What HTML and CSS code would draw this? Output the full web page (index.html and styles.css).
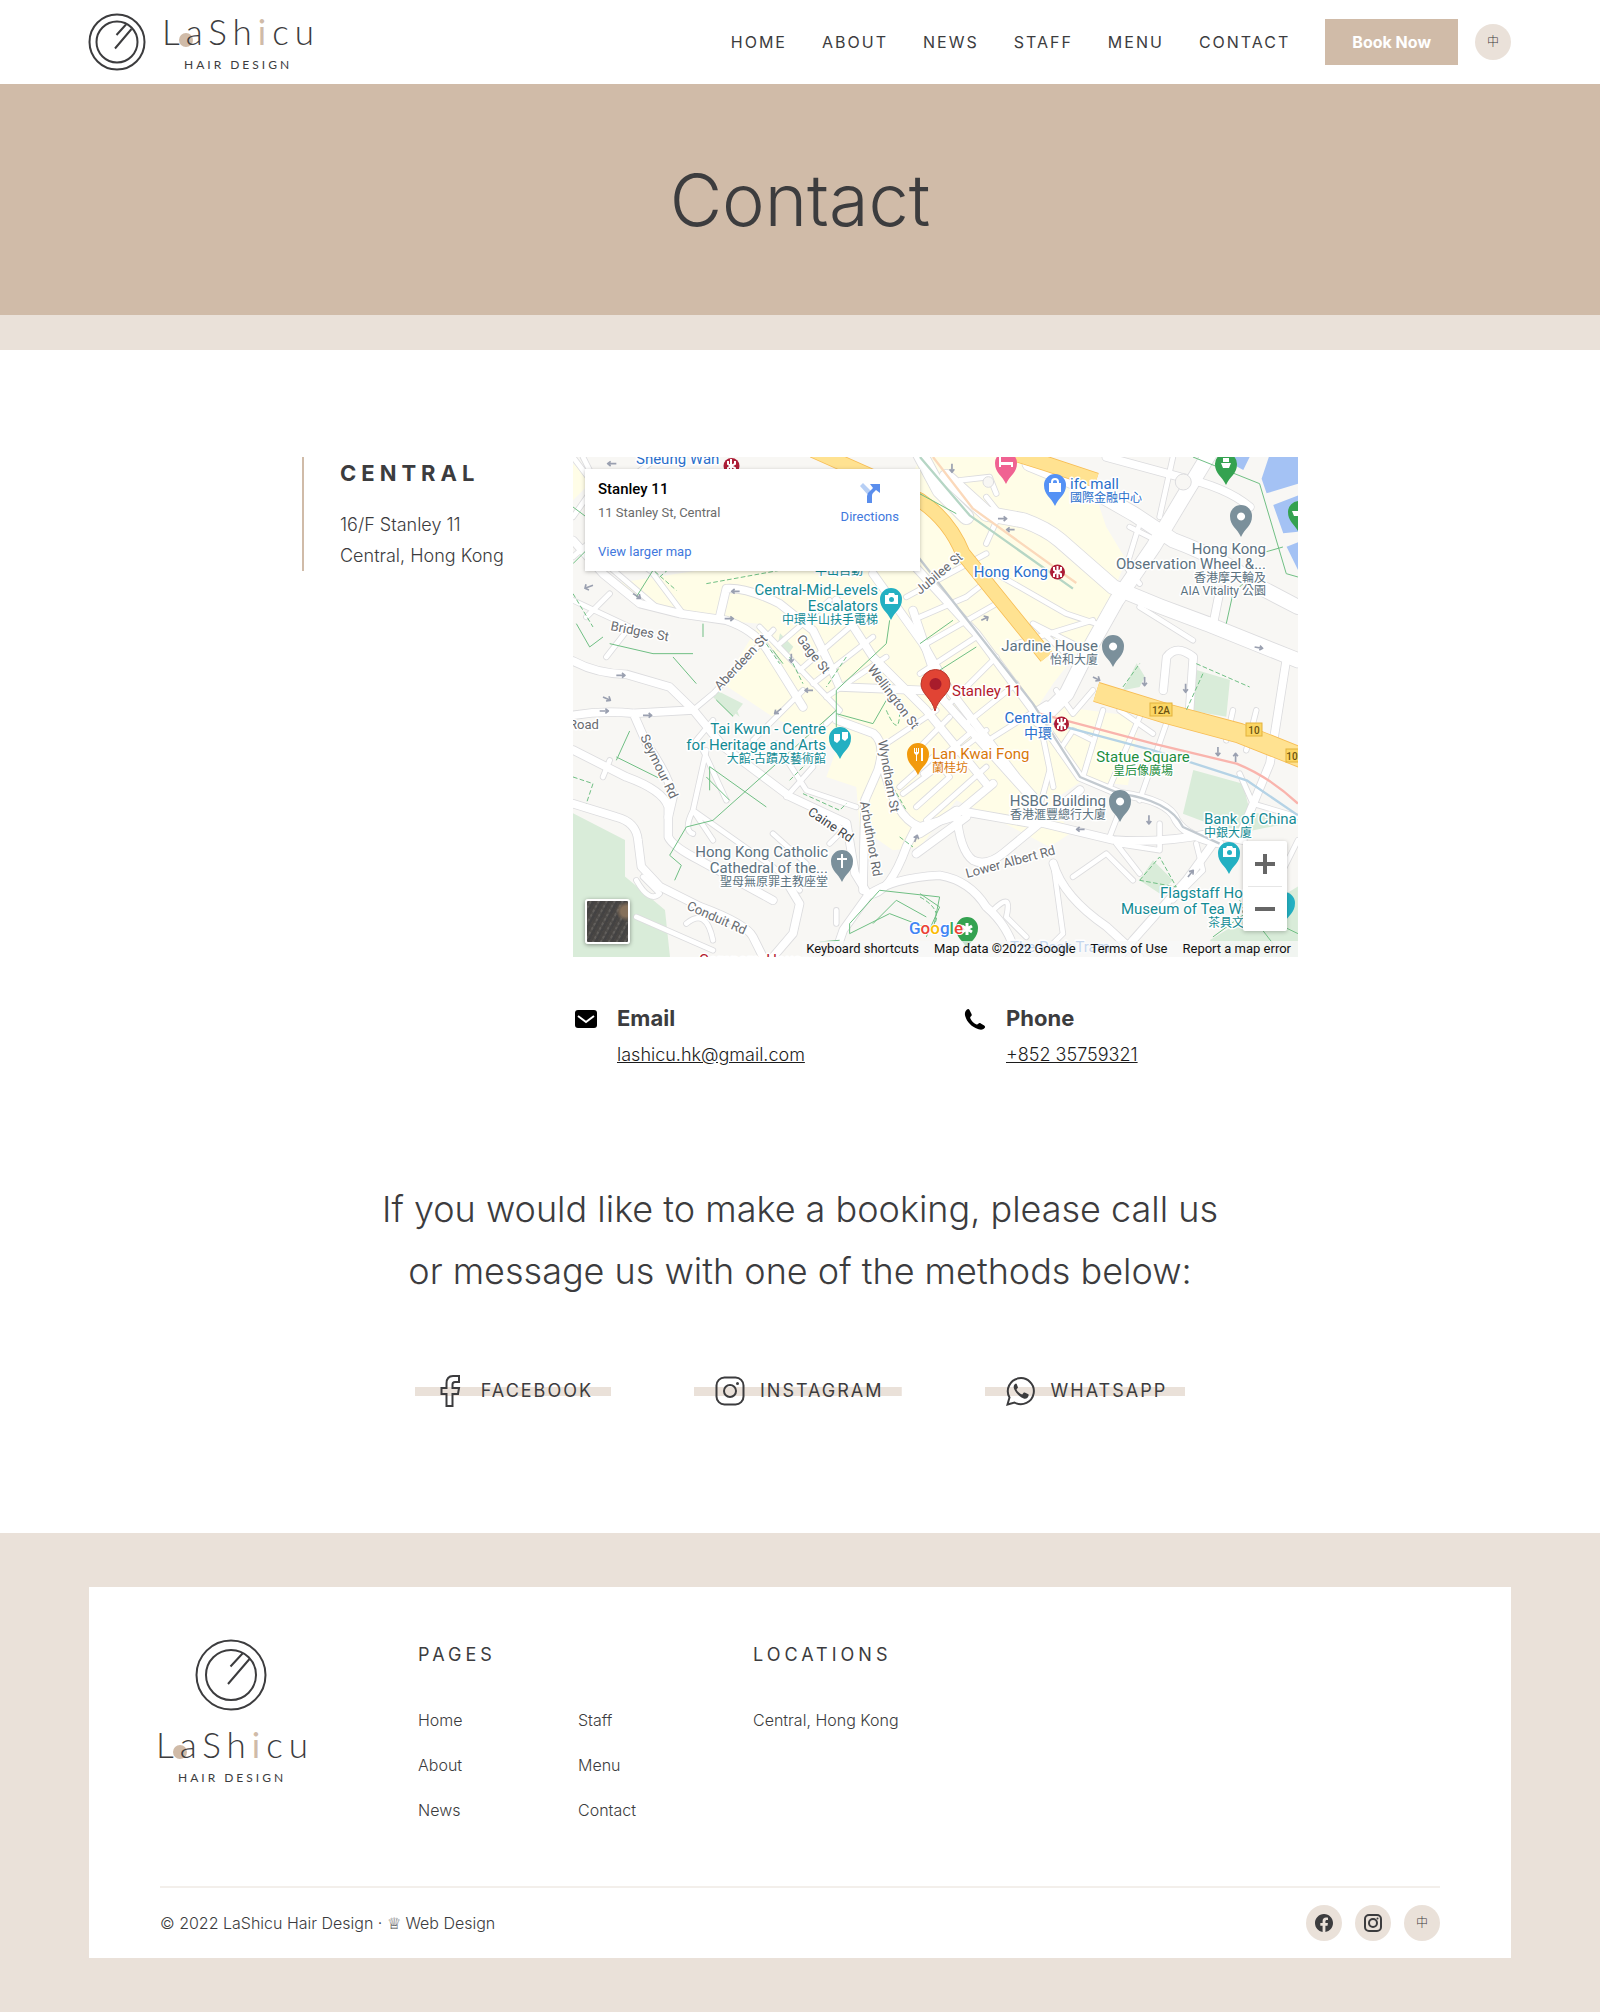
FILE: index.html
```html
<!DOCTYPE html>
<html lang="en">
<head>
<meta charset="utf-8">
<meta name="viewport" content="width=device-width, initial-scale=1">
<title>Contact - LaShicu Hair Design</title>
<link rel="stylesheet" href="styles.css">
</head>
<body>
<header class="site-header">
  <a class="brand" href="#" aria-label="LaShicu Hair Design">
    <svg viewBox="0 0 230 60" width="230" height="60">
      <g class="logo-line"><circle cx="28" cy="30" r="27.5"/><circle cx="28" cy="30" r="20.5"/><path d="M37 12.500 27.500 23M42.500 17 26 36.500"/></g>
      <circle class="logo-dot" cx="97" cy="28" r="7"/>
      <text class="logo-name" x="73" y="33">LaSh<tspan class="logo-accent">i</tspan>cu</text>
      <text class="logo-sub" x="95" y="57">HAIR DESIGN</text>
    </svg>
  </a>
  <nav class="main-nav">
    <a href="#">HOME</a>
    <a href="#">ABOUT</a>
    <a href="#">NEWS</a>
    <a href="#">STAFF</a>
    <a href="#">MENU</a>
    <a href="#">CONTACT</a>
  </nav>
  <a class="book" href="#">Book Now</a>
  <a class="round" href="#" lang="zh">中</a>
</header>

<main>
  <div class="banner"><h1>Contact</h1></div>

  <section class="location">
    <div class="address">
      <h2>CENTRAL</h2>
      <p>16/F Stanley 11<br>Central, Hong Kong</p>
    </div>
    <div class="details">
      <div class="map">
        <svg class="map-art" viewBox="0 0 725 500" preserveAspectRatio="xMidYMid slice">
          <defs>
            <g id="roads-l">
              <path d="M1120 60 1241 170 1351 190Q1420 215 1461 250L1621 390Q1760 450 1901 500L2175 610"/>
              <path d="M1370 20 1541 90 1681 170 1801 250Q1960 310 2041 380L2175 450"/>
              <path d="M1041-10 1100 100 1180 180"/>
              <path d="M1910-10 1831 120 1741 270 1631 430 1541 590 1481 710 1400 790"/>
            </g>
            <g id="roads-m">
              <path d="M0 612Q70 650 160 652L290 690 361 759 451 869 651 1019 821 1099 846 1249 886 1314"/>
              <path d="M886 1314Q960 1262 1100 1255 1190 1270 1240 1350 1310 1410 1330 1500"/>
              <path d="M886 1314 811 1419 780 1510M886 1314Q950 1310 1000 1170L1030 1110"/>
              <path d="M0 1040 130 1080Q190 1095 195 1150L205 1229 261 1289 381 1349Q520 1400 540 1440L575 1510"/>
              <path d="M0 879 160 960Q270 1000 286 1050V1140Q300 1170 380 1210L600 1330"/>
              <path d="M0 775Q90 760 181 769L361 759M181 769 221 860Q290 960 300 1020L286 1080"/>
              <path d="M90 350 201 440 321 470 460 490Q550 520 590 590L690 750M90 350 0 250"/>
              <path d="M440 480 460 395Q520 390 620 440L720 520Q770 620 800 690L1050 700"/>
              <path d="M790 430 900 600 1060 760 1240 980M1020 460 1111 729 1381 1029"/>
              <path d="M900 350 1050 560 1130 700 1330 960 1400 1040"/>
              <path d="M1000 300 1210 530 1380 759 1521 960 1640 1010Q1790 1030 1810 1090 1840 1140 1940 1160"/>
              <path d="M1411 1099 1621 1149Q1760 1160 1911 1130L2010 1150"/>
              <path d="M1151 1069Q1160 1180 1200 1210 1240 1230 1291 1189L1521 999"/>
              <path d="M1041 1130 1151 1060 1380 1100M1030 1190 1180 1080"/>
              <path d="M1441 1219Q1470 1320 1601 1409L1700 1500M1921 1159 1841 1269 1681 1449 1640 1500"/>
              <path d="M791 789 901 829Q940 860 915 940L876 1029 870 1300M925 900Q960 1080 1040 1110L1140 1080 1260 980"/>
              <path d="M1600 0 1821 60Q1960 90 2031 150M1941 400 1921 500M2140 610 2091 919 2000 1140"/>
              <path d="M1771 700 1781 600Q1811 560 1861 600L1850 760"/>
              <path d="M620 1240 680 1340 660 1430 600 1500"/>
            </g>
            <g id="roads-s">
              <path d="M601 519 421 709 361 759M540 850 690 700M560 510 800 760 760 800"/>
              <path d="M620 560 770 430M680 640 900 450M720 680 900 540M760 720 940 600"/>
              <path d="M1000 420 1240 290M1041 480 1180 420M1060 560 1270 440M1041 650 1210 540M1130 740 1270 600M1180 800 1330 680M1230 860 1420 740"/>
              <path d="M1041 870 1130 780M1050 950 1190 830M990 1010 1240 820M1060 1090 1240 930M940 860 1090 760"/>
              <path d="M980 990 1080 900 1130 960 1030 1050M1400 1050 1430 940M1530 960 1590 760M1610 990 1700 780M1700 1030 1780 800M1660 1010 1610 1140"/>
              <path d="M40 480 110 410M110 330 250 450M0 430 170 510 100 600M240 350 330 470M0 300 90 220M60 200 230 340M0 180 70 80 30 0M90 120 0 0M230 20 120 100 60 60"/>
              <path d="M400 880 360 1060 420 1150M360 1060 600 1230 680 1300M360 1060Q330 1120 360 1130M720 930 640 1020M610 860 700 1000 850 1050M420 790 370 850M110 910 90 960M780 1090 810 1120 770 1160"/>
              <path d="M400 900Q380 860 400 900L460 1030M600 1130 700 1220M190 1270Q230 1340 260 1310L210 1260M190 1380 420 1480M340 1400Q400 1350 420 1450M790 1360V1400"/>
              <path d="M1240 120 1280 170 1240 260M1160 70 1250 60 1270 110M1180 420 1270 350 1480 470 1570 500M1670 210 1750 250M1700 200 1660 330 1700 380M1700 450 1860 550M1800 0 1760 180M1980 760 1960 850M2050 760 2020 880"/>
              <path d="M1260 1360Q1320 1300 1300 1380L1360 1440M1441 1219 1470 1430 1400 1500M1500 1260 1600 1190 1680 1270M1760 1100V1180L1630 1160 1700 1250M1870 1160 1890 1240 1800 1330M2000 950 2040 1040 2175 1080M2175 1150 2100 1300"/>
              <path d="M1410 840 1441 990M1460 880 1500 820 1560 850M1640 760 1740 830M1500 610 1380 500 1540 580M1330 560 1560 490M1450 700 1500 770 1560 700"/>
            </g>
          </defs>
          <g transform="scale(.3333)">
            <rect class="land" width="2180" height="1505"/>
            <path class="shops" d="M380 340H900L1041 0H1310L1560 90 1600 210 1660 310 1580 500 1440 680 1400 740 1700 780 1665 985 1530 970 1440 1030 1490 1130 1430 1170 1240 1070 1150 1030 1041 1170 960 1180 860 1110 850 990 760 960 790 880 600 780 450 680 560 500 330 480 120 380zM0 20 60 70 0 130z"/>
            <path class="park" d="M0 1069 156 1149V1259L276 1359 291 1500H0zM1861 939 2010 980 2030 1060 2140 1100 1990 1130 1830 1070zM1871 639 1971 669 1960 779 1841 759zM1691 619 1716 659 1700 690 1650 700zM621 529 661 569 641 599 611 580zM430 700 510 740 480 780 420 720zM1740 1210 1800 1270 1760 1310 1700 1270zM1911 1449 2175 1289V1500H1940zM480 729 500 780 440 729z"/>
            <path class="water" d="M2091-10H2180V79L2081 109 2066 65zM2101 144 2180 114V224L2131 229zM2141 269 2180 254V349zM1921-10H2035L2011 39z"/>
            <g class="casing">
              <use href="#roads-s" stroke-width="19"/><use href="#roads-m" stroke-width="28"/><use href="#roads-l" stroke-width="48"/>
            </g>
            <g class="paving">
              <use href="#roads-s" stroke-width="14"/><use href="#roads-m" stroke-width="23"/><use href="#roads-l" stroke-width="43"/>
            </g>
            <circle class="roundabout" cx="1831" cy="75" r="24"/><circle class="roundabout" cx="1246" cy="75" r="16"/>
            <g class="highway-edge"><path d="M720-20 900 60 1041 130Q1130 190 1170 290L1421 600M1290-20 1420 20 1570 70" stroke-width="46"/><path d="M1570 705 1781 770 2001 829 2190 904" stroke-width="62"/></g>
            <g class="highway"><path d="M720-20 900 60 1041 130Q1130 190 1170 290L1421 600M1290-20 1420 20 1570 70" stroke-width="41"/><path d="M1570 705 1781 770 2001 829 2190 904" stroke-width="57"/></g>
            <g class="rail"><path class="rail-red" d="M1400 770 1741 860 1991 920Q2090 960 2175 1040"/><path class="rail-blue" d="M1440 800 1741 880 2021 970 2175 1075"/><path class="rail-orange" d="M1080 0 1200 155 1510 378"/><path class="rail-green" d="M1041 0 1190 175 1500 395"/><path class="rail-gray" d="M1020 280 1380 740 1521 960 1640 1010Q1790 1030 1830 1110L1940 1160"/></g>
            <g class="path">
              <path d="M0 150 40 180M0 320 40 280M390 540V500M240 340 190 420M110 560 240 590 360 590M300 600 370 680M10 500 50 570 90 540M1040 110 1150 170M1041 560 1140 490M1100 640 1210 570M1860 0 2060 80 2140 350 2175 360M2060 290 2130 270M1960 500 1980 410 2010 380M950 490 940 560 790 700V810M130 910 170 822M130 900 255 962M410 929 580 1050M400 960 470 1030M410 929V1000M420 1090 790 760M420 1090 340 1110 290 1195 325 1225 305 1270M430 729 480 778M790 770 900 800 940 730M830 1400 920 1300 1100 1320 1080 1420 950 1370 830 1430zM900 1400 970 1330 1060 1380M740 1455 800 1450M980 200 1041 120M1041 1310 1100 1350 1060 1440M1920 1440 2030 1360 2175 1430M2000 1330 2100 1460M600 580 630 620"/>
              <path class="dash" d="M230 330 310 400M400 380 620 340M260 360 340 290M650 600 690 680M580 560 620 620M0 960 60 980 40 1040M690 1010 800 1060 820 1040M820 600 760 690M1650 690 1700 620M1870 620 2030 690M1890 650 1840 760M1700 1270 1760 1200 1810 1290zM650 970 700 920 680 940M960 990 1000 1060M980 1140 1020 1170M940 760Q980 850 980 760M1041 1320Q1130 1370 1060 1430M0 410 60 510"/>
            </g>
            <g class="arrows">
              <path d="M130 20h-26m9-7-9 7 9 7M60 385l-24 9m12 5-12-5 3-12M180 410l22 14m-3-13 3 13-12 0M500 403h-24m9-7-9 7 9 7M455 485h26m-9-7 9 7-9 7M130 655h26m-9-7 9 7-9 7M90 720l22 10m-4-12 4 12-13 2M210 775h26m-9-7 9 7-9 7M80 762h26m-9-7 9 7-9 7M720 700h-24m9-7-9 7 9 7M1275 185h26m-9-7 9 7-9 7M1325 218h-24m9-7-9 7 9 7M1137 20v26m-7-9 7 9 7-9M1225 490l20-10m-13-3 13 3-3 12M2045 570l24 4m-8-8 8 8-10 5M1838 680v26m-7-9 7 9 7-9M1715 660v26m-7-9 7 9 7-9M1935 870v26m-7-9 7 9 7-9M1988 915v-26m-7 9 7-9 7 9M1535 1117h-24m9-7-9 7 9 7M1728 1075v26m-7-9 7 9 7-9M1845 1260l16-20m-13 4 13-4-1 13M1560 660l20 10m-4-12 4 12-13 2M1025 1155l8-20m-11 7 11-7 4 12M655 590v26m-7-9 7 9 7-9M625 755l-20 15m13-1-13 1 3-12"/>
            </g>
          </g>
          <g class="shields"><rect x="577" y="246" width="22" height="13"/><rect x="673" y="266" width="16" height="13"/><rect x="713" y="292" width="18" height="13"/><text x="588" y="257">12A</text><text x="681" y="277">10</text><text x="719" y="303">10</text></g>
          <g class="streets">
            <text transform="translate(37 173)rotate(11)">Bridges St</text>
            <text transform="translate(147 234)rotate(-47)">Aberdeen St</text>
            <text transform="translate(223 182)rotate(52)">Gage St</text>
            <text transform="translate(294 212)rotate(53)">Wellington St</text>
            <text transform="translate(347 138)rotate(-40)">Jubilee St</text>
            <text transform="translate(67 280)rotate(64)">Seymour Rd</text>
            <text transform="translate(305 284)rotate(80)">Wyndham St</text>
            <text transform="translate(287 345)rotate(80)">Arbuthnot Rd</text>
            <text class="dark" transform="translate(234 357)rotate(34)">Caine Rd</text>
            <text transform="translate(113 452)rotate(24)">Conduit Rd</text>
            <text transform="translate(394 421)rotate(-15)">Lower Albert Rd</text>
            <text x="-4" y="272">Road</text>
          </g>
          <g class="pins">
            <path id="pin" class="teal" d="M318 163c-4-9-11-11-11-21a11 11 0 0 1 22 0c0 10-7 12-11 21z"/>
            <use href="#pin" x="-51" y="139"/>
            <use href="#pin" x="338" y="254"/>
            <use href="#pin" x="393" y="304"/>
          </g>
          <g class="pin-shapes">
            <path class="blue" d="M482 49c-4-9-11-11-11-21a11 11 0 0 1 22 0c0 10-7 12-11 21z"/>
            <path class="pink" d="M433 27c-4-9-11-11-11-21a11 11 0 0 1 22 0c0 10-7 12-11 21z"/>
            <path class="green" d="M653 28c-4-9-11-11-11-21a11 11 0 0 1 22 0c0 10-7 12-11 21zM726 76c-4-9-11-11-11-21a11 11 0 0 1 22 0c0 10-7 12-11 21zM394 492c-4-9-11-11-11-21a11 11 0 0 1 22 0c0 10-7 12-11 21z"/>
            <path class="gray" d="M668 80c-4-9-11-11-11-21a11 11 0 0 1 22 0c0 10-7 12-11 21zM540 210c-4-9-11-11-11-21a11 11 0 0 1 22 0c0 10-7 12-11 21zM547 365c-4-9-11-11-11-21a11 11 0 0 1 22 0c0 10-7 12-11 21zM269 425c-4-9-11-11-11-21a11 11 0 0 1 22 0c0 10-7 12-11 21z"/>
            <path class="orange" d="M345 318c-4-9-11-11-11-21a11 11 0 0 1 22 0c0 10-7 12-11 21z"/>
            <path class="red" d="M362 254c-3-13-14-17-14-27a14 14 0 0 1 29 0c0 10-12 14-15 27z"/>
            <circle class="deep" cx="362.500" cy="227" r="6"/>
            <path class="glyph" d="M668 55.500a4 4 0 1 0 .1 0zM540 185.500a4 4 0 1 0 .1 0zM547 340.500a4 4 0 1 0 .1 0zM312 138h3l1-2h5l1 2h3v9h-13zM650 391h3l1-2h5l1 2h3v9h-13zM261 277h6v6l-3 3-3-2zM269 275h6v6l-3 3-3-2zM268 397h2v4h4v2h-4v8h-2v-8h-4v-2h4zM476 26h12v9h-12zM426 0h2v5h12v5h-2v-2h-10v2h-2zM648 6h10l-2 5h-6zM650 1h6v4h-6zM719 54h8v5h-6zM341 291h1v4h1v-4h1v4h1v-4h1v5l-2 2v6h-1v-6l-2-2zM348 291h2v13h-2z"/>
            <path class="bag" d="M479 27v-2a3 3 0 0 1 6 0v2"/>
            <circle class="lens" cx="318.500" cy="142.500" r="2.500"/><circle class="lens" cx="656.500" cy="395.500" r="2.500"/>
            <path class="flower" d="M394 466v12M389 469l10 6M399 469l-10 6"/>
            <g class="station"><circle cx="158.500" cy="9" r="8"/><circle cx="484.500" cy="115" r="7.500"/><circle cx="488.500" cy="267" r="7.500"/><path d="M155 4v3l3 2 4-2V4M158 2v12M155 14v-3l3-2 4 2v3M481 110v3l3 2 4-2v-3M484.500 109v12M481 120v-3l3-2 4 2v3M485 262v3l3 2 4-2v-3M488.500 261v12M485 272v-3l3-2 4 2v3"/></g>
          </g>
          <g class="places">
            <g class="t-blue"><text x="63" y="7">Sheung Wan</text><text x="497" y="32">ifc mall</text><text class="zh" x="497" y="45">國際金融中心</text><g class="end"><text x="475" y="120">Hong Kong</text><text x="479" y="266">Central</text><text class="zh big" x="479" y="281">中環</text></g><text x="437" y="495">The Peak Tram</text></g>
            <g class="t-teal end"><text x="305" y="138">Central-Mid-Levels</text><text x="305" y="154">Escalators</text><text class="zh" x="305" y="167">中環半山扶手電梯</text><text x="253" y="277">Tai Kwun - Centre</text><text x="253" y="293">for Heritage and Arts</text><text class="zh" x="253" y="306">大館-古蹟及藝術館</text><text class="zh" x="290" y="118">半山自動</text></g>
            <g class="t-teal"><text x="631" y="367">Bank of China</text><text class="zh" x="631" y="380">中銀大廈</text><text x="587" y="441">Flagstaff House</text><text x="548" y="457">Museum of Tea Ware</text><text class="zh" x="635" y="470">茶具文物館</text></g>
            <g class="t-gray end"><text x="693" y="97">Hong Kong</text><text x="693" y="112">Observation Wheel &amp;...</text><text class="zh" x="693" y="125">香港摩天輪及</text><text class="zh" x="693" y="138">AIA Vitality 公園</text><text x="525" y="194">Jardine House</text><text class="zh" x="525" y="207">怡和大廈</text><text x="533" y="349">HSBC Building</text><text class="zh" x="533" y="362">香港滙豐總行大廈</text><text x="255" y="400">Hong Kong Catholic</text><text x="255" y="416">Cathedral of the...</text><text class="zh" x="255" y="429">聖母無原罪主教座堂</text></g>
            <g class="t-orange"><text x="359" y="302">Lan Kwai Fong</text><text class="zh" x="359" y="315">蘭桂坊</text></g>
            <g class="t-green mid"><text x="570" y="305">Statue Square</text><text class="zh" x="570" y="318">皇后像廣場</text></g>
            <text class="t-red" x="379" y="239">Stanley 11</text>
            <text class="t-red" x="126" y="508">Company House</text>
          </g>
          <text class="google" x="336" y="477"><tspan class="g-blue">G</tspan><tspan class="g-red">o</tspan><tspan class="g-yellow">o</tspan><tspan class="g-blue">g</tspan><tspan class="g-green">l</tspan><tspan class="g-red">e</tspan></text>
        </svg>
        <div class="map-card">
          <div class="map-place">
            <strong>Stanley 11</strong>
            <span>11 Stanley St, Central</span>
            <a href="#">View larger map</a>
          </div>
          <a class="directions" href="#">
            <svg viewBox="0 0 20 20" width="20" height="20"><path fill="#b7cff5" d="m0 3 3-3 8 8-3 4z"/><path fill="#5a8eed" d="M7 20v-7q0-3 3-5l3-3-3-4h10v9l-4-3-3 3q-1 1-1 3v7z"/></svg>
            Directions
          </a>
        </div>
        <button class="satellite" type="button" aria-label="Show satellite imagery"></button>
        <div class="zoom">
          <button type="button" aria-label="Zoom in"><svg viewBox="0 0 20 20" width="20" height="20"><path d="M8 0h4v8h8v4h-8v8H8v-8H0V8h8z"/></svg></button>
          <button type="button" aria-label="Zoom out"><svg viewBox="0 0 20 20" width="20" height="20"><path d="M0 8h20v4H0z"/></svg></button>
        </div>
        <div class="map-legal"><button type="button">Keyboard shortcuts</button><span>Map data ©2022 Google</span><a href="#">Terms of Use</a><a href="#">Report a map error</a></div>
      </div>
      <div class="contacts">
        <div class="contact">
          <svg viewBox="0 0 26 26" width="26" height="26"><path d="M5 4h16a3 3 0 0 1 3 3v12a3 3 0 0 1-3 3H5a3 3 0 0 1-3-3V7a3 3 0 0 1 3-3z"/><path class="flap" d="m5 10 8 6 8-6"/></svg>
          <h3>Email</h3>
          <a href="mailto:lashicu.hk@gmail.com">lashicu.hk@gmail.com</a>
        </div>
        <div class="contact">
          <svg viewBox="0 0 26 26" width="26" height="26"><path d="M5 3.500C6 2.500 7 3 7.500 4l2 4c.5 1 .2 1.700-.5 2.300-1 .8-1 1.400-.5 2.400 1.300 2.500 3 4.200 5.500 5.500 1 .5 1.600.4 2.300-.4.700-.8 1.500-1 2.500-.4l3.400 2.200c1 .7 1.200 1.600.4 2.500-1.500 1.700-3.500 2-6 1.200C9.500 20.800 5 16.300 3.200 10 2.500 7.500 3 5 5 3.500z"/></svg>
          <h3>Phone</h3>
          <a href="tel:+85235759321">+852 35759321</a>
        </div>
      </div>
    </div>
  </section>

  <section class="booking">
    <p>If you would like to make a booking, please call us<br>or message us with one of the methods below:</p>
    <div class="channels">
      <a href="#"><svg viewBox="0 0 32 32" width="32" height="32"><path d="M11.500 31V19h-5v-6h5V8.500C11.500 3.500 14 1 18 1h6v6h-4c-2 0-2.500 1-2.500 2.500V13h6.500l-1 6h-5.500v12z"/></svg>FACEBOOK</a>
      <a href="#"><svg viewBox="0 0 32 32" width="32" height="32"><rect x="2.500" y="2.500" width="27" height="27" rx="8"/><circle cx="16" cy="16" r="6"/><circle class="solid" cx="23.500" cy="8.500" r="1.500"/></svg>INSTAGRAM</a>
      <a href="#"><svg viewBox="0 0 32 32" width="32" height="32"><path d="M2.500 29.500 4.500 22.500A13 13 0 1 1 9.500 27.500z"/><path class="solid" d="M11 8.500c-1.500.5-2.500 2-2.300 4 .3 3 5 9.500 10 11 2.500.7 4.800-.8 5-3.500l-.3-.8-3.700-1.800-.9.200-1.600 2c-2.500-.8-4.500-2.600-5.700-5l1.500-2-1.300-3.700z"/></svg>WHATSAPP</a>
    </div>
  </section>
</main>

<footer class="site-footer">
  <div class="footer-card">
    <div class="footer-top">
      <a class="brand" href="#" aria-label="LaShicu Hair Design">
        <svg viewBox="0 0 150 146" width="150" height="146">
          <g class="logo-line"><circle cx="71" cy="35" r="34.500"/><circle cx="71" cy="35" r="25"/><path d="M82.500 13.500 70.500 26.500M89.500 19 68 44"/></g>
          <circle class="logo-dot" cx="20" cy="112" r="7"/>
          <text class="logo-name" x="-4" y="118">LaSh<tspan class="logo-accent">i</tspan>cu</text>
          <text class="logo-sub" x="18" y="142">HAIR DESIGN</text>
        </svg>
      </a>
      <nav class="footer-pages">
        <h2>PAGES</h2>
        <ul>
          <li><a href="#">Home</a></li><li><a href="#">About</a></li><li><a href="#">News</a></li>
          <li><a href="#">Staff</a></li><li><a href="#">Menu</a></li><li><a href="#">Contact</a></li>
        </ul>
      </nav>
      <nav>
        <h2>LOCATIONS</h2>
        <ul><li><a href="#">Central, Hong Kong</a></li></ul>
      </nav>
    </div>
    <div class="footer-bottom">
      <p>© 2022 LaShicu Hair Design · <a href="#">♕ Web Design</a></p>
      <div class="footer-social">
        <a class="round" href="#" aria-label="Facebook"><svg viewBox="0 0 16 16" width="18" height="18"><path d="M16 8.049c0-4.446-3.582-8.050-8-8.050C3.580 0-.002 3.603-.002 8.050c0 4.017 2.926 7.347 6.750 7.951v-5.625h-2.030V8.050H6.750V6.275c0-2.017 1.195-3.131 3.022-3.131.876 0 1.791.157 1.791.157v1.980h-1.009c-.993 0-1.303.621-1.303 1.258v1.510h2.218l-.354 2.326H9.250V16c3.824-.604 6.750-3.934 6.750-7.951"/></svg></a>
        <a class="round" href="#" aria-label="Instagram"><svg class="outline" viewBox="0 0 18 18" width="18" height="18"><rect x="1" y="1" width="16" height="16" rx="4"/><circle cx="9" cy="9" r="4"/><circle class="solid" cx="13.500" cy="4.500" r="1"/></svg></a>
        <a class="round" href="#" lang="zh">中</a>
      </div>
    </div>
  </div>
</footer>
</body>
</html>
```
FILE: styles.css
```css
:root {
  --ink: #3c3c3e;
  --tan: #d0bba8;
  --sand: #eae1d9;
  --sans: Inter, "Noto Sans CJK TC", "DejaVu Sans", sans-serif;
}

* { box-sizing: border-box; }

body {
  margin: 0;
  background: #fff;
  color: var(--ink);
  font: 300 16px/1.8 var(--sans);
}

h1, h2, h3, p, ul { margin: 0; }
ul { padding: 0; list-style: none; }
a { color: inherit; text-decoration: none; }
svg { display: block; flex: none; }

/* Header */
.site-header {
  display: flex;
  align-items: center;
  height: 84px;
  padding: 0 89px;
}
.main-nav {
  display: flex;
  gap: 35px;
  margin: 0 35px 0 auto;
  font-weight: 400;
  letter-spacing: 2px;
}
.book {
  padding: 0 27px;
  background: var(--tan);
  color: #fff;
  font-weight: 700;
  line-height: 46px;
}
.round {
  display: flex;
  align-items: center;
  justify-content: center;
  width: 36px;
  height: 36px;
  border-radius: 50%;
  background: var(--sand);
  font-size: 12px;
  line-height: 1;
}
.site-header .round { margin-left: 17px; }

.brand svg { overflow: visible; }
.logo-line { fill: none; stroke: var(--ink); stroke-width: 2; }
.logo-dot { fill: var(--tan); }
.logo-name { font: 300 35px Lato, sans-serif; letter-spacing: 6px; fill: var(--ink); }
.logo-accent { font-weight: 400; fill: var(--tan); }
.logo-sub { font: 400 12px Lato, sans-serif; letter-spacing: 3px; fill: var(--ink); }

/* Banner */
.banner {
  padding: 58px 0;
  border-bottom: 35px solid var(--sand);
  background: var(--tan);
  text-align: center;
}
h1 { font-size: 72px; font-weight: 300; line-height: 115px; }

/* Location */
.location {
  display: flex;
  justify-content: space-between;
  align-items: flex-start;
  width: 70%;
  max-width: 996px;
  min-width: 900px;
  margin: 0 auto;
  padding-top: 107px;
}
.address {
  flex: none;
  width: 271px;
  padding-left: 36px;
  border-left: 2px solid var(--tan);
  font-size: 18px;
  line-height: 31px;
}
.address h2 { margin-bottom: 20px; font-size: 22px; line-height: 32px; letter-spacing: 5px; }
.details { flex: 1; }

.map { position: relative; overflow: hidden; height: 500px; font-family: Roboto, sans-serif; font-weight: 400; line-height: 16px; }
.map-art { width: 100%; height: 100%; }
.land { fill: #f8f7f4; }
.shops { fill: #fffde7; }
.park { fill: #d9ecd9; }
.water { fill: #a4c2f4; }
.casing, .paving, .highway, .highway-edge, .rail, .path, .arrows { fill: none; stroke-linejoin: round; }
.casing { stroke: #dcdcde; }
.paving { stroke: #fff; }
.casing, .paving { stroke-linecap: round; }
.roundabout { fill: #f8f7f4; stroke: #dcdcde; stroke-width: 3; }
.highway { stroke: #ffe291; }
.highway-edge { stroke: #f7bd55; }
.rail { stroke-width: 7; }
.rail-red { stroke: #f9b4ad; }
.rail-blue { stroke: #b5d3e6; }
.rail-orange { stroke: #fbd9bb; }
.rail-green { stroke: #b6d6c5; }
.rail-gray { stroke: #c3cad0; }
.path { stroke: #6fbf84; stroke-width: 3; }
.dash { stroke-dasharray: 14 7; }
.arrows { stroke: #9aa0b0; stroke-width: 5; }
.shields rect { fill: #fbd665; stroke: #e3b23c; }
.shields text { font-size: 10px; font-weight: 500; text-anchor: middle; fill: #6b5310; }
.streets text, .places text { paint-order: stroke; stroke: #fff; stroke-width: 3px; stroke-linejoin: round; }
.streets { font-size: 13px; fill: #686b70; }
.streets .dark { fill: #44474b; }
.places { font-size: 15px; }
.places .zh { font-family: Roboto, "Noto Sans CJK TC", sans-serif; font-size: 12px; }
.places .big { font-size: 14px; }
.end { text-anchor: end; }
.mid { text-anchor: middle; }
.t-blue { fill: #2a6fcb; }
.t-teal { fill: #138b94; }
.t-gray { fill: #5c7280; }
.t-orange { fill: #d9770b; }
.t-green { fill: #1e8e3e; }
.t-red { fill: #b3192b; }
.teal { fill: #23b0c2; }
.blue { fill: #5491f5; }
.pink { fill: #f06292; }
.green { fill: #34a250; }
.gray { fill: #7b909b; }
.orange { fill: #f29a0c; }
.red { fill: #e14434; stroke: #b8352a; }
.deep { fill: #a81c2c; }
.glyph { fill: #fff; }
.bag { fill: none; stroke: #fff; stroke-width: 2; }
.flower { stroke: #fff; stroke-width: 3; }
.lens { fill: #23b0c2; }
.station circle { fill: #ac1c36; }
.station path { fill: none; stroke: #fff; stroke-width: 2; }
.google { font: 500 17px Roboto, sans-serif; paint-order: stroke; stroke: #fff; stroke-width: 2px; }
.g-blue { fill: #4285f4; }
.g-red { fill: #ea4335; }
.g-yellow { fill: #fbbc05; }
.g-green { fill: #34a853; }

.map button { padding: 0; border: 0; background: none; color: inherit; font: inherit; }
.map-card {
  position: absolute;
  top: 12px;
  left: 12px;
  display: flex;
  justify-content: space-between;
  width: 335px;
  height: 102px;
  padding: 12px 21px 12px 13px;
  background: #fff;
  box-shadow: 0 1px 4px rgba(0, 0, 0, .25);
  font-size: 13px;
}
.map-place { display: flex; flex-direction: column; }
.map-place strong { margin-bottom: 8px; color: #000; font-size: 15px; font-weight: 500; }
.map-place span { margin-bottom: 23px; color: #6b6b6b; }
.map-card a { color: #4178dd; }
.directions { display: flex; flex-direction: column; align-items: center; gap: 6px; padding-top: 2px; }
.satellite {
  position: absolute;
  bottom: 13px;
  left: 12px;
  width: 45px;
  height: 45px;
}
.map .satellite {
  border: 2px solid #fff;
  border-radius: 3px;
  background: radial-gradient(circle at 95% 25%, #86705a 0 5px, transparent 10px), repeating-linear-gradient(37deg, rgba(70, 68, 66, .6) 0 2px, transparent 3px 5px), repeating-linear-gradient(118deg, #4a4745 0 2px, #615e5b 3px 4px, #434243 5px 7px);
  box-shadow: 0 1px 4px rgba(0, 0, 0, .4);
}
.zoom {
  position: absolute;
  right: 11px;
  bottom: 26px;
  width: 44px;
  padding: 0 5px;
  border-radius: 2px;
  background: #fff;
  box-shadow: 0 1px 4px rgba(0, 0, 0, .25);
  fill: #666;
}
.zoom button { display: flex; align-items: center; justify-content: center; width: 34px; height: 45px; }
.zoom button + button { border-top: 1px solid #e6e6e6; }
.map-legal {
  position: absolute;
  right: 0;
  bottom: 0;
  display: flex;
  gap: 15px;
  padding: 0 7px 0 4px;
  background: rgba(248, 248, 248, .75);
  color: #111;
  font-size: 13px;
}

.contacts { display: grid; grid-template-columns: 389px 1fr; margin-top: 46px; }
.contact {
  display: grid;
  grid-template-columns: 26px 1fr;
  column-gap: 18px;
  row-gap: 5px;
  align-items: center;
  justify-items: start;
  line-height: 31px;
}
.contact svg { fill: #000; }
.contact .flap { fill: none; stroke: #fff; stroke-width: 2; }
.contact h3 { font-size: 22px; font-weight: 700; }
.contact a { grid-column: 2; color: #1c1c1c; font-size: 18px; text-decoration: underline; }

/* Booking */
.booking { padding: 108px 0 126px; text-align: center; }
.booking p { font-size: 36px; line-height: 62px; }
.channels { display: flex; justify-content: center; gap: 83px; margin-top: 73px; }
.channels a {
  display: flex;
  align-items: center;
  gap: 14px;
  padding: 0 18px 0 20px;
  background: linear-gradient(var(--sand), var(--sand)) center / 100% 9px no-repeat;
  font-size: 18px;
  font-weight: 400;
  line-height: 32px;
  letter-spacing: 2px;
}
.channels svg, .outline { fill: none; stroke: var(--ink); stroke-width: 2; }
.solid { fill: var(--ink); stroke: none; }

/* Footer */
.site-footer { padding: 54px 89px; background: var(--sand); }
.footer-card { padding: 53px 71px 17px; background: #fff; }
.footer-top { display: grid; grid-template-columns: 258px 335px 1fr; padding-bottom: 61px; }
.footer-top h2 { margin-bottom: 36px; font-size: 18px; font-weight: 400; line-height: 30px; letter-spacing: 4px; }
.footer-top ul { display: grid; gap: 16px; line-height: 29px; }
.footer-pages ul { grid-auto-flow: column; grid-template-columns: 160px 1fr; grid-template-rows: repeat(3, auto); column-gap: 0; }
.footer-bottom {
  display: flex;
  align-items: center;
  justify-content: space-between;
  padding-top: 17px;
  border-top: 2px solid #f3efeb;
}
.footer-social { display: flex; gap: 13px; fill: var(--ink); }
```
